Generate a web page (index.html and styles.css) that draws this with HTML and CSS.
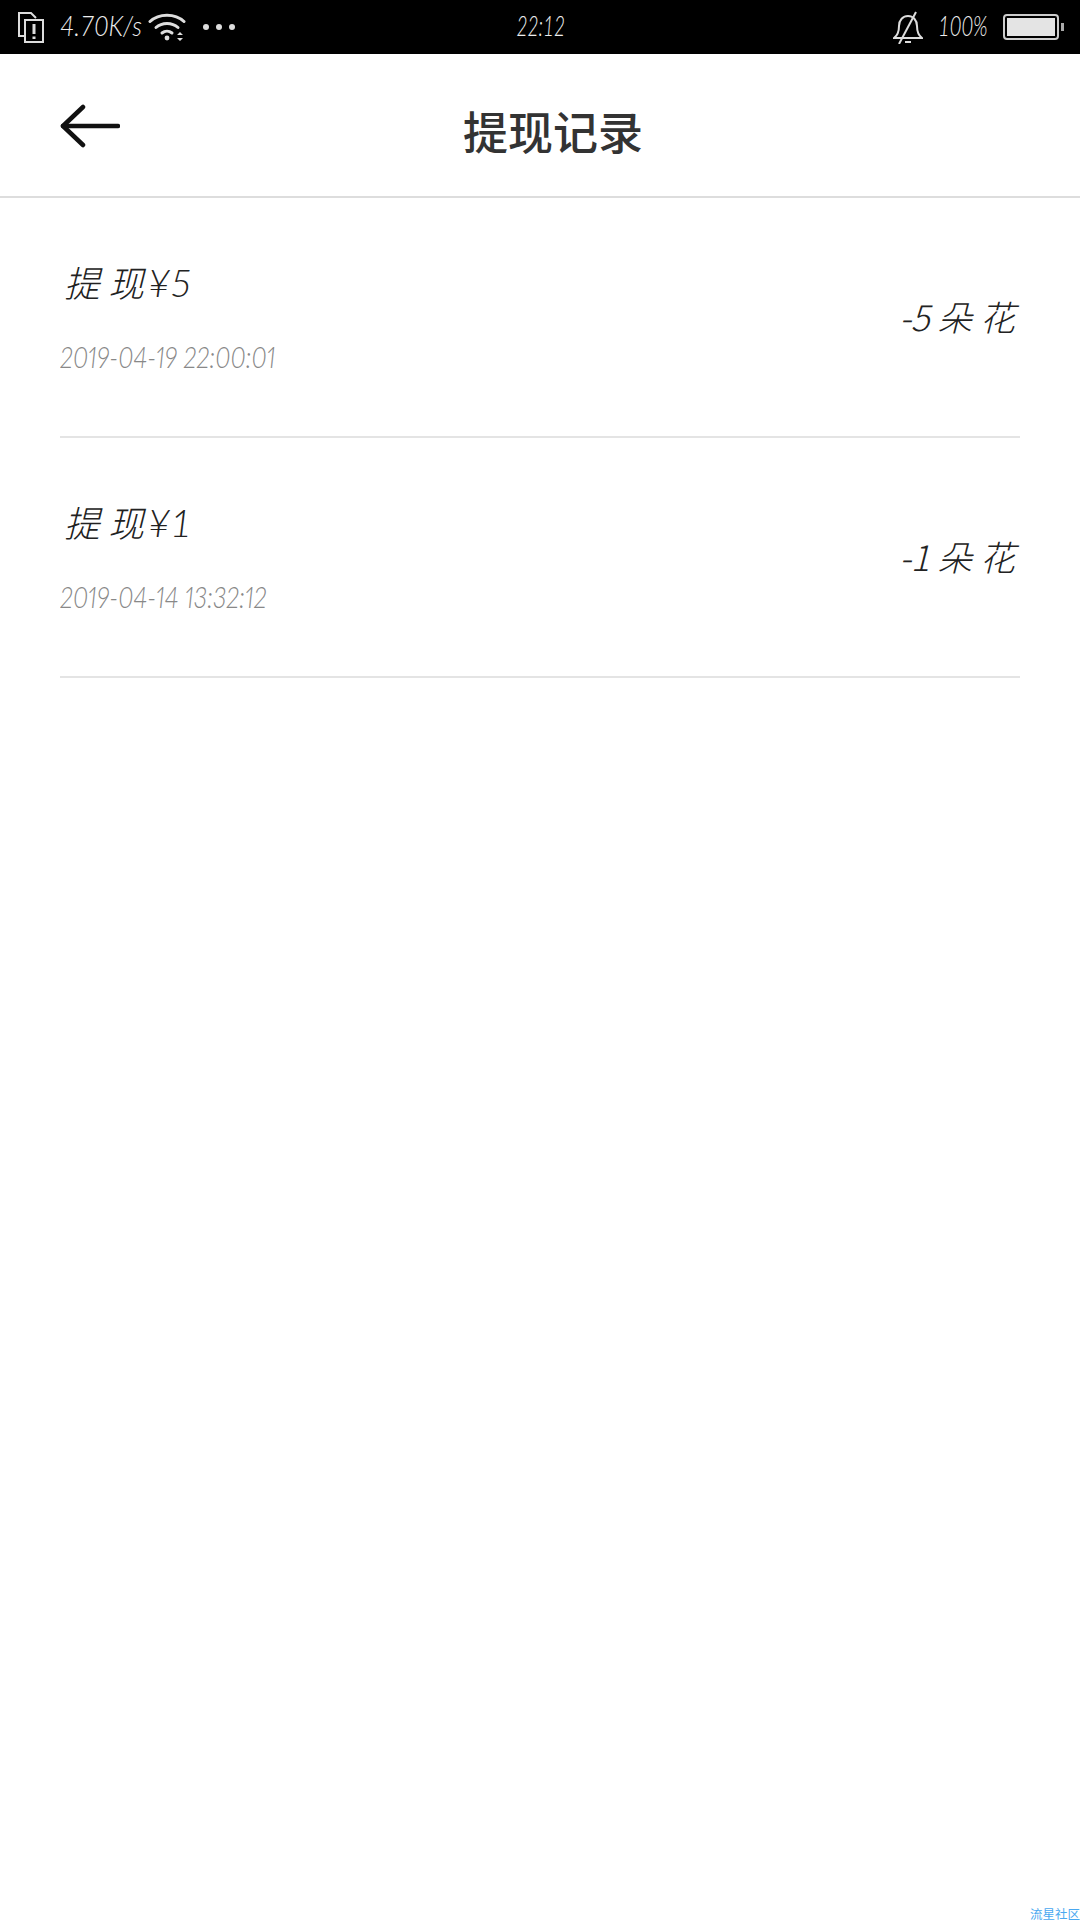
FILE: index.html
```html
<!doctype html>
<html>
<head>
<meta charset="utf-8">
<meta name="viewport" content="width=device-width, initial-scale=1.0">
<link rel="stylesheet" href="styles.css">
<title>提现记录</title>
</head>
<body>
<div class="status-bar">
	<div class="status-left">
		<svg class="icon-sim" width="28" height="32" viewBox="0 0 28 32" fill="none" stroke="#ddd" stroke-width="2">
			<path d="M8 25H2V2h12l5 5"/>
			<path d="M8 9h18v22H8z"/>
			<path d="M17 13v10M17 25.500v2.500" stroke-width="3"/>
		</svg>
		<span class="net-speed">4.70K/s</span>
		<svg class="icon-wifi" width="38" height="30" viewBox="0 0 38 30" fill="none" stroke="#ddd" stroke-width="3" stroke-linecap="round">
			<path d="M2 9.500C11 1 27 1 36 9.500"/>
			<path d="M8 15.500C14 10 24 10 30 15.500"/>
			<path d="M14 21C17 18.500 21 18.500 24 21"/>
			<circle cx="19" cy="26" r="2.400" fill="#ddd" stroke="none"/>
			<path d="M29 23l3-3 3 3zM29 26l3 3 3-3z" fill="#ddd" stroke="none"/>
		</svg>
		<span class="dots"><i></i><i></i><i></i></span>
	</div>
	<div class="clock">22:12</div>
	<div class="status-right">
		<svg class="icon-bell" width="30" height="33" viewBox="0 0 30 33" fill="none" stroke="#ddd" stroke-width="2">
			<path d="M1 27c4-3 5-6 5-12 0-6 4-10 9-10s9 4 9 10c0 6 1 9 5 12z"/>
			<path d="M23 1L6 33"/>
			<path d="M12 31h6"/>
		</svg>
		<span class="battery-text">100%</span>
		<div class="battery"><div class="battery-fill"></div></div>
		<div class="battery-tip"></div>
	</div>
</div>

<div class="top-bar">
	<svg class="back" width="60" height="44" viewBox="0 0 60 44" fill="none" stroke="#111" stroke-width="4.500" stroke-linecap="round" stroke-linejoin="round">
		<path d="M23 3L3 22l20 19"/>
		<path d="M3 22h55"/>
	</svg>
	<h1>提现记录</h1>
</div>

<div class="record">
	<div class="record-info">
		<div class="record-title">提 现<span class="money">¥5</span></div>
		<div class="record-time">2019-04-19 22:00:01</div>
	</div>
	<div class="record-amount">-5 朵 花</div>
</div>
<div class="record">
	<div class="record-info">
		<div class="record-title">提 现<span class="money">¥1</span></div>
		<div class="record-time">2019-04-14 13:32:12</div>
	</div>
	<div class="record-amount">-1 朵 花</div>
</div>

<div class="watermark">流星社区</div>
</body>
</html>
```

FILE: styles.css
```css
html, body {
    margin: 0;
    padding: 0;
}
body {
    position: relative;
    width: 1080px;
    height: 1920px;
    overflow: hidden;
    background-color: white;
    font-family: "Noto Sans CJK SC", "Noto Sans", sans-serif;
}
h1 {
    margin: 0;
    font-size: 45px;
    font-weight: 500;
    line-height: 52px;
    color: #333;
}

/* status bar */
.status-bar {
    display: grid;
    grid-template-columns: 1fr auto 1fr;
    align-items: center;
    height: 54px;
    padding: 0 16px 0 17px;
    box-sizing: border-box;
    background-color: black;
    color: #eee;
    font-family: "Lato", "Noto Sans", sans-serif;
    font-weight: 300;
}
.status-left, .status-right {
    display: flex;
    align-items: center;
}
.status-right {
    justify-content: flex-end;
}
.net-speed {
    display: inline-block;
    margin: -4px 0 0 15px;
    width: 82px;
    font-size: 28px;
    font-style: italic;
    white-space: nowrap;
    transform: scaleX(0.88);
    transform-origin: left;
}
.icon-wifi {
    margin-left: 6px;
}
.dots {
    display: flex;
    gap: 7px;
    margin-left: 17px;
}
.dots i {
    width: 6px;
    height: 6px;
    border-radius: 50%;
    background-color: #ddd;
}
.clock {
    margin-top: -4px;
    font-size: 28px;
    font-style: italic;
    transform: scaleX(0.68);
}
.battery-text {
    display: inline-block;
    margin: -4px 0 0 15px;
    width: 49px;
    font-size: 28px;
    font-style: italic;
    white-space: nowrap;
    transform: scaleX(0.72);
    transform-origin: left;
}
.battery {
    margin-left: 16px;
    width: 56px;
    height: 26px;
    padding: 2px;
    box-sizing: border-box;
    border: 2px solid #ccc;
    border-radius: 4px;
}
.battery-fill {
    height: 100%;
    background-color: #e4e4e4;
}
.battery-tip {
    margin-left: 2px;
    width: 3px;
    height: 8px;
    background-color: #aaa;
}

/* title bar */
.top-bar {
    display: flex;
    align-items: center;
    height: 142px;
    padding-left: 60px;
    border-bottom: 2px solid #ddd;
}
.back {
    margin-top: 2px;
}
.top-bar h1 {
    margin-top: 12px;
    margin-left: 343px;
}

/* list */
.record {
    display: flex;
    justify-content: space-between;
    align-items: center;
    height: 238px;
    margin: 0 60px;
    border-bottom: 2px solid #e4e4e4;
}
.record-info {
    padding-bottom: 4px;
}
.record-title {
    font-size: 36px;
    font-weight: 300;
    line-height: 44px;
    color: #222;
    padding-left: 4px;
    font-style: italic;
}
.money {
    margin-left: 4px;
    font-family: "Lato", sans-serif;
    font-size: 38px;
}
.record-time {
    margin-top: 36px;
    font-family: "Lato", sans-serif;
    font-size: 30px;
    font-weight: 300;
    font-style: italic;
    font-variant-numeric: proportional-nums;
    line-height: 32px;
    color: #888;
    white-space: nowrap;
    transform: scaleX(0.833);
    transform-origin: left;
}
.record-amount {
    padding: 0 5px 3px 0;
    font-size: 35px;
    font-weight: 300;
    font-style: italic;
    color: #222;
}

.watermark {
    position: absolute;
    right: 0;
    bottom: 0;
    font-size: 12.500px;
    line-height: 13px;
    color: #4aa8f0;
}
```
